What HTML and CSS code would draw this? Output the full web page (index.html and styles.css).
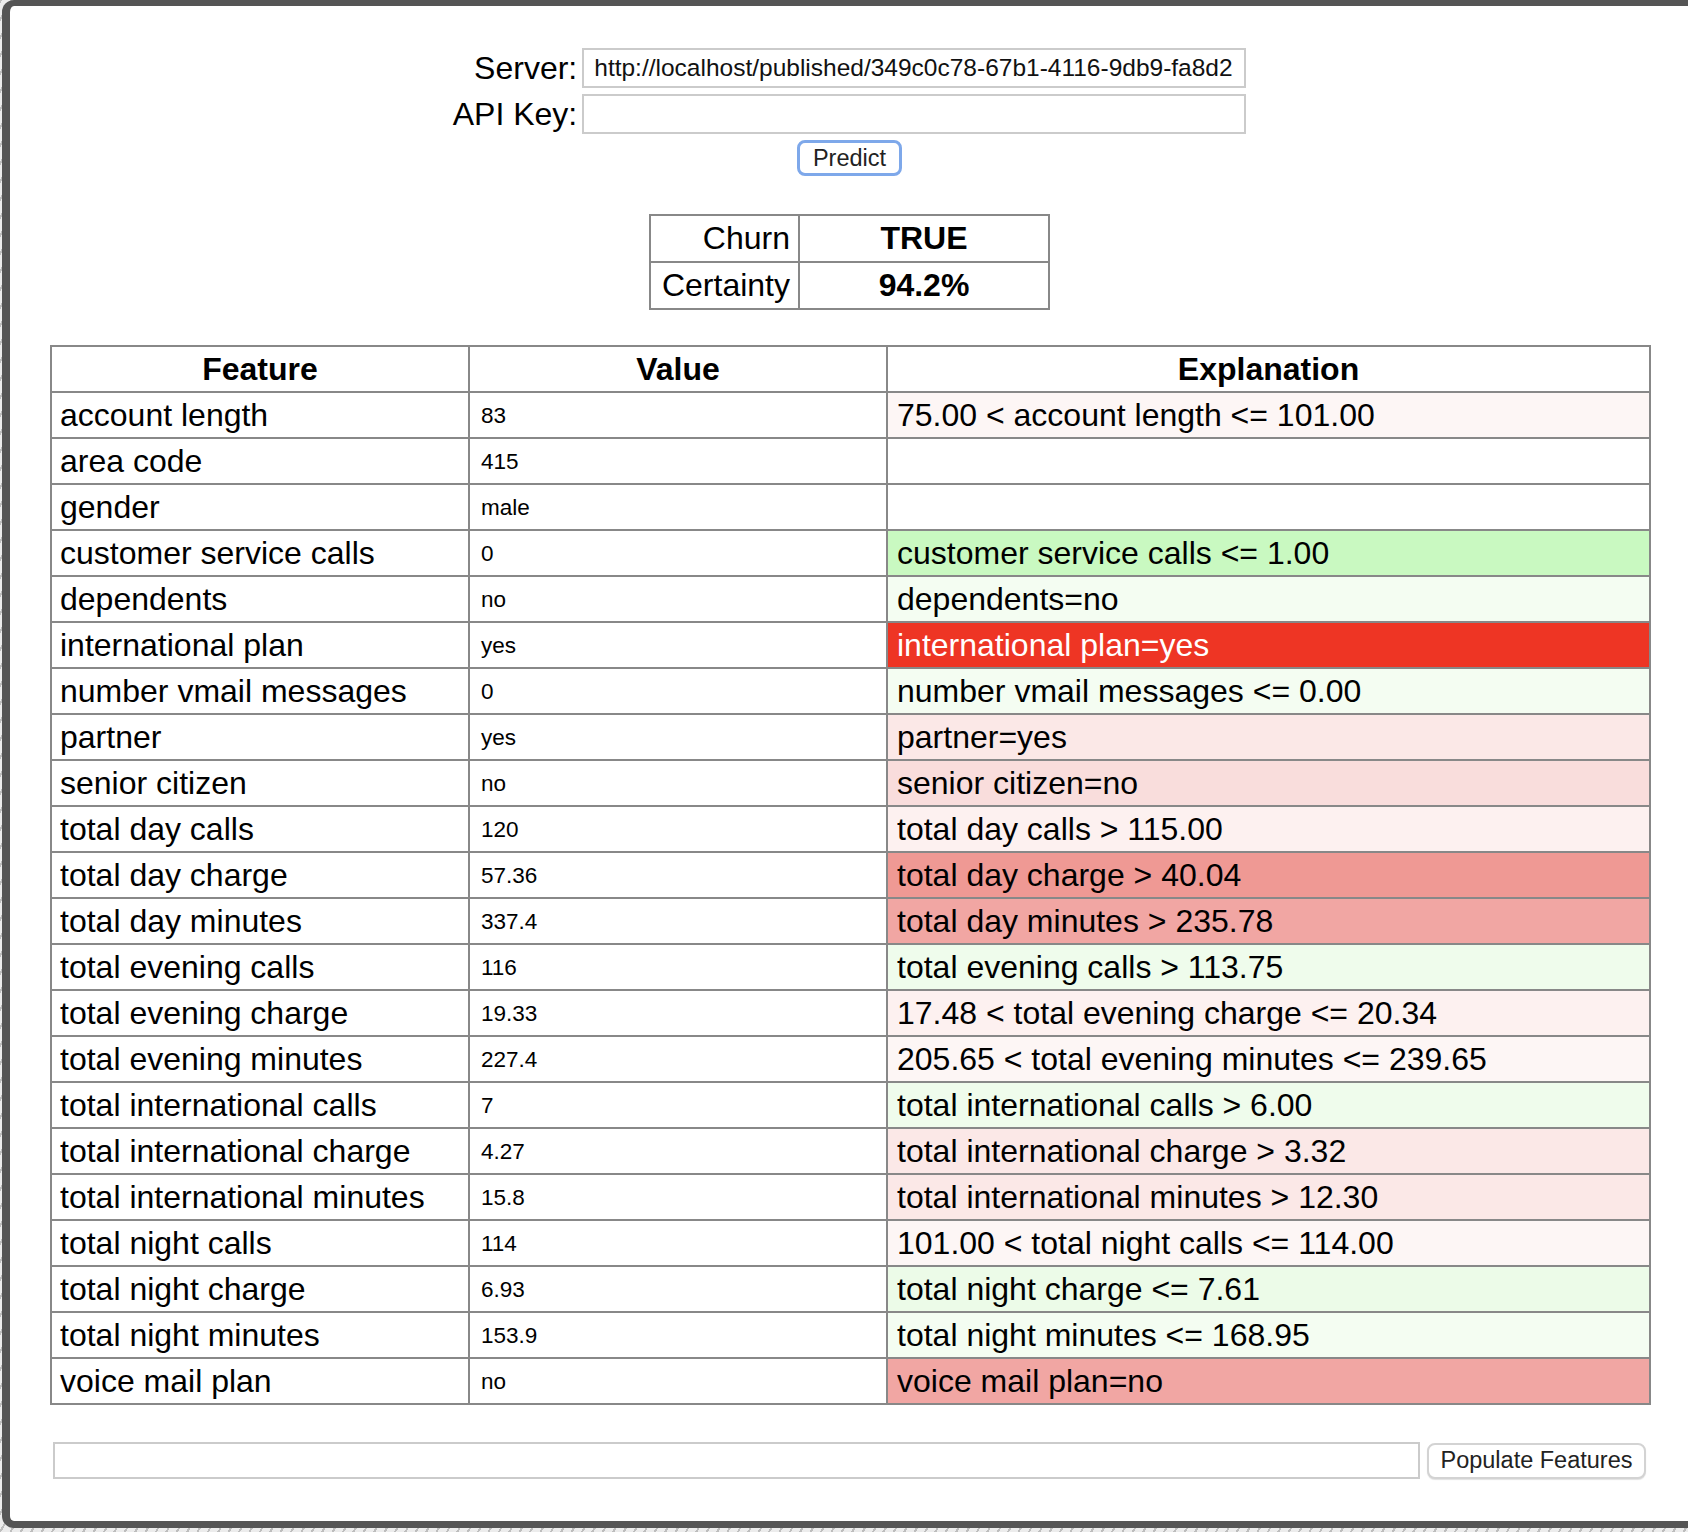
FILE: index.html
```html
<!DOCTYPE html>
<html>
<head>
<meta charset="utf-8">
<title>Churn Prediction</title>
<link rel="stylesheet" href="styles.css">
</head>
<body>
<div class="window">
  <div class="connect">
    <label class="lbl" for="server">Server:</label>
    <input id="server" class="field" type="text" value="http://localhost/published/349c0c78-67b1-4116-9db9-fa8d2">
    <label class="lbl" for="apikey">API Key:</label>
    <input id="apikey" class="field" type="text" value="">
  </div>
  <div class="predict-row"><button class="predict">Predict</button></div>

  <table class="result">
    <tr><td class="rkey">Churn</td><td class="rval">TRUE</td></tr>
    <tr><td class="rkey">Certainty</td><td class="rval">94.2%</td></tr>
  </table>

  <table class="features">
    <colgroup><col class="c1"><col class="c2"><col class="c3"></colgroup>
    <tr><th>Feature</th><th>Value</th><th>Explanation</th></tr>
    <tr><td>account length</td><td class="v">83</td><td class="e n1">75.00 &lt; account length &lt;= 101.00</td></tr>
    <tr><td>area code</td><td class="v">415</td><td class="e"></td></tr>
    <tr><td>gender</td><td class="v">male</td><td class="e"></td></tr>
    <tr><td>customer service calls</td><td class="v">0</td><td class="e p4">customer service calls &lt;= 1.00</td></tr>
    <tr><td>dependents</td><td class="v">no</td><td class="e p1">dependents=no</td></tr>
    <tr><td>international plan</td><td class="v">yes</td><td class="e n9">international plan=yes</td></tr>
    <tr><td>number vmail messages</td><td class="v">0</td><td class="e p1">number vmail messages &lt;= 0.00</td></tr>
    <tr><td>partner</td><td class="v">yes</td><td class="e n3">partner=yes</td></tr>
    <tr><td>senior citizen</td><td class="v">no</td><td class="e n4">senior citizen=no</td></tr>
    <tr><td>total day calls</td><td class="v">120</td><td class="e n2">total day calls &gt; 115.00</td></tr>
    <tr><td>total day charge</td><td class="v">57.36</td><td class="e n7">total day charge &gt; 40.04</td></tr>
    <tr><td>total day minutes</td><td class="v">337.4</td><td class="e n6">total day minutes &gt; 235.78</td></tr>
    <tr><td>total evening calls</td><td class="v">116</td><td class="e p2">total evening calls &gt; 113.75</td></tr>
    <tr><td>total evening charge</td><td class="v">19.33</td><td class="e n2">17.48 &lt; total evening charge &lt;= 20.34</td></tr>
    <tr><td>total evening minutes</td><td class="v">227.4</td><td class="e n1">205.65 &lt; total evening minutes &lt;= 239.65</td></tr>
    <tr><td>total international calls</td><td class="v">7</td><td class="e p2">total international calls &gt; 6.00</td></tr>
    <tr><td>total international charge</td><td class="v">4.27</td><td class="e n3">total international charge &gt; 3.32</td></tr>
    <tr><td>total international minutes</td><td class="v">15.8</td><td class="e n3">total international minutes &gt; 12.30</td></tr>
    <tr><td>total night calls</td><td class="v">114</td><td class="e n1">101.00 &lt; total night calls &lt;= 114.00</td></tr>
    <tr><td>total night charge</td><td class="v">6.93</td><td class="e p3">total night charge &lt;= 7.61</td></tr>
    <tr><td>total night minutes</td><td class="v">153.9</td><td class="e p1">total night minutes &lt;= 168.95</td></tr>
    <tr><td>voice mail plan</td><td class="v">no</td><td class="e n6">voice mail plan=no</td></tr>
  </table>

  <div class="populate">
    <input class="field json" type="text" value="">
    <button class="pop-btn">Populate Features</button>
  </div>
</div>
</body>
</html>
```
FILE: styles.css
```css
html, body {
  margin: 0;
  padding: 0;
  height: 100%;
}
body {
  background-color: #d9d9d9;
  background-image: repeating-linear-gradient(120deg, #bdbdbd 0 2px, #ececec 2px 9px);
  font-family: "Liberation Sans", Arial, Helvetica, sans-serif;
  color: #000;
  overflow: hidden;
}
.window {
  box-sizing: border-box;
  margin-left: 2px;
  height: 1528px;
  background: #fff;
  border: 8px solid #555;
  border-top-width: 6px;
  border-bottom-width: 7px;
  border-right: 0;
  border-radius: 12px 0 0 12px;
  padding: 42px 39px 0 40px;
}
.connect {
  display: grid;
  grid-template-columns: auto 664px;
  justify-content: center;
  align-items: center;
  column-gap: 5px;
  row-gap: 6px;
}
.lbl {
  font-size: 32px;
  text-align: right;
  line-height: 40px;
}
.field {
  box-sizing: border-box;
  height: 40px;
  border: 2px solid #cbcbcb;
  border-radius: 0;
  padding: 0 10px;
  font-family: "Liberation Sans", Arial, sans-serif;
  font-size: 24.5px;
  color: #111;
  background: #fff;
  outline: none;
  margin: 0;
}
.predict-row {
  display: flex;
  justify-content: center;
  margin-top: 6px;
}
.predict {
  box-sizing: border-box;
  width: 105px;
  height: 36px;
  background: #fff;
  border: 3px solid #7ea8ea;
  border-radius: 8px;
  font-family: "Liberation Sans", Arial, sans-serif;
  font-size: 23.5px;
  color: #222;
  padding: 0;
}
.result {
  border-collapse: collapse;
  margin: 38px auto 0;
  font-size: 32px;
}
.result td {
  border: 2px solid #888;
  height: 47px;
  padding: 0 8px;
  box-sizing: border-box;
}
.rkey {
  width: 149px;
  text-align: right;
}
.rval {
  width: 250px;
  text-align: center;
  font-weight: bold;
}
.features {
  border-collapse: collapse;
  margin-top: 35px;
  width: 1599px;
  table-layout: fixed;
  font-size: 32px;
}
.features col.c1 { width: 418px; }
.features col.c2 { width: 418px; }
.features col.c3 { width: 763px; }
.features th,
.features td {
  border: 2px solid #888;
  height: 44px;
  padding: 0 8px;
  text-align: left;
  white-space: nowrap;
  overflow: hidden;
}
.features th {
  text-align: center;
  font-weight: bold;
}
.features td.v {
  font-size: 22.5px;
  height: 42px;
  padding: 2px 8px 0 11px;
}
.features td.e { padding-left: 9px; }
.e.p1 { background: #f4fdf2; }
.e.p2 { background: #effcec; }
.e.p3 { background: #ecfbe8; }
.e.p4 { background: #c9f9c1; }
.e.n1 { background: #fdf6f5; }
.e.n2 { background: #fdf1f0; }
.e.n3 { background: #fbe8e7; }
.e.n4 { background: #f9dddc; }
.e.n6 { background: #f1a6a3; }
.e.n7 { background: #ef9994; }
.e.n9 { background: #ee3524; color: #fff; }
.populate {
  display: flex;
  align-items: center;
  gap: 7px;
  margin-top: 37px;
  padding: 0 3px;
}
.json {
  flex: 1;
  height: 37px;
}
.pop-btn {
  box-sizing: border-box;
  width: 219px;
  height: 36px;
  background: #fff;
  border: 2px solid #d3d3d3;
  border-radius: 8px;
  box-shadow: 0 1px 1px rgba(0,0,0,0.12);
  font-family: "Liberation Sans", Arial, sans-serif;
  font-size: 23.5px;
  color: #222;
  padding: 0;
}
```
